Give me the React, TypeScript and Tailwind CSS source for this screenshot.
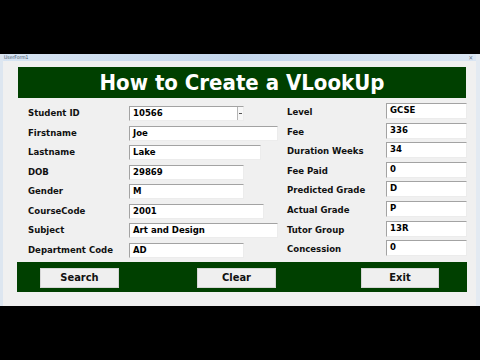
import React from "react";

const FONT = { fontFamily: '"DejaVu Sans Condensed", "DejaVu Sans", Verdana, sans-serif' };

type Row = { label: string; value: string; w: number; combo?: boolean };

const left: Row[] = [
  { label: "Student ID", value: "10566", w: 115, combo: true },
  { label: "Firstname", value: "Joe", w: 149 },
  { label: "Lastname", value: "Lake", w: 132 },
  { label: "DOB", value: "29869", w: 115 },
  { label: "Gender", value: "M", w: 115 },
  { label: "CourseCode", value: "2001", w: 135 },
  { label: "Subject", value: "Art and Design", w: 149 },
  { label: "Department Code", value: "AD", w: 115 },
];

const right: Row[] = [
  { label: "Level", value: "GCSE", w: 81 },
  { label: "Fee", value: "336", w: 81 },
  { label: "Duration Weeks", value: "34", w: 81 },
  { label: "Fee Paid", value: "0", w: 81 },
  { label: "Predicted Grade", value: "D", w: 81 },
  { label: "Actual Grade", value: "P", w: 81 },
  { label: "Tutor Group", value: "13R", w: 81 },
  { label: "Concession", value: "0", w: 81 },
];

function Box({ row, h }: { row: Row; h: number }) {
  return (
    <div
      className="relative flex bg-white border border-t-[#a3a3a3] border-l-[#a3a3a3] border-r-[#ececec] border-b-[#ececec]"
      style={{ width: row.w, height: h }}
    >
      <span className="pl-[3px] text-[9.5px] font-bold leading-[12px] text-black">{row.value}</span>
      {row.combo && (
        <div className="absolute right-0 top-0 bottom-0 w-[6px] border-l border-[#b5b5b5] bg-[#f7f7f7] flex items-center justify-center">
          <div className="w-[3px] h-[1px] bg-[#555]" />
        </div>
      )}
    </div>
  );
}

export default function App() {
  return (
    <div className="w-[480px] h-[360px] bg-black flex flex-col pt-[54px]" style={FONT}>
      <div className="h-[252px] bg-[#f0f0f0] flex flex-col border-l-[3px] border-r-[4px] border-l-[#dde6f0] border-r-[#e3eaf2]">
        <div className="h-[7px] bg-gradient-to-r from-[#d7e4f2] via-[#c3d6ec] to-[#d9e5f3] flex items-center">
          <span className="pl-[1px] text-[5px] leading-[5px] text-[#44546a]">UserForm1</span>
          <span className="ml-auto mr-[3px] text-[6px] leading-[6px] text-[#6a7a90]">✕</span>
        </div>
        <div className="ml-[15px] mt-[6px] w-[448px] h-[31px] bg-[#004000] flex items-center justify-center">
          <span className="text-white font-bold text-[22px] leading-[24px] pt-[1px]">How to Create a VLookUp</span>
        </div>
        <div className="h-[164px] flex">
          <div className="ml-[25px] w-[259px] pt-[8px] flex flex-col">
            {left.map((r) => (
              <div key={r.label} className="h-[19.5px] flex items-start">
                <span className="w-[101px] text-[9.5px] font-bold leading-[13px] text-[#111]">{r.label}</span>
                <Box row={r} h={15} />
              </div>
            ))}
          </div>
          <div className="pt-[5px] flex flex-col">
            {right.map((r) => (
              <div key={r.label} className="h-[19.6px] flex items-start">
                <span className="w-[99px] text-[9.5px] font-bold leading-[18px] text-[#111]">{r.label}</span>
                <Box row={r} h={16} />
              </div>
            ))}
          </div>
        </div>
        <div className="ml-[14px] w-[450px] h-[30px] bg-[#004000] flex items-start pt-[6px]">
          <button className="ml-[23px] w-[79px] h-[20px] bg-[#efefef] border border-[#d6d6d6] text-[11px] font-bold text-[#111] leading-[18px]">Search</button>
          <button className="ml-[78px] w-[79px] h-[20px] bg-[#efefef] border border-[#d6d6d6] text-[11px] font-bold text-[#111] leading-[18px]">Clear</button>
          <button className="ml-[85px] w-[78px] h-[20px] bg-[#efefef] border border-[#d6d6d6] text-[11px] font-bold text-[#111] leading-[18px]">Exit</button>
        </div>
      </div>
    </div>
  );
}
